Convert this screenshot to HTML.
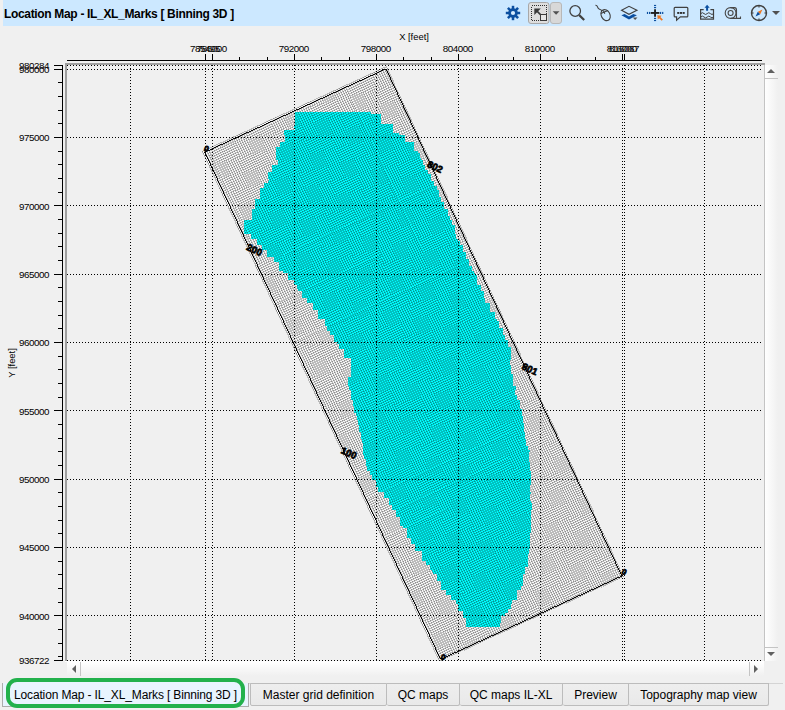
<!DOCTYPE html>
<html><head><meta charset="utf-8"><title>Location Map</title>
<style>
html,body{margin:0;padding:0;}
body{width:785px;height:710px;overflow:hidden;background:#f0f0f0;font-family:"Liberation Sans",sans-serif;position:relative;}
#title{position:absolute;left:3px;top:0;width:779px;height:26px;background:#cce8ff;}
#titler{position:absolute;left:782px;top:0;width:3px;height:26px;background:#e3f0fa;}
#title span{position:absolute;left:1px;top:7px;font-size:12px;font-weight:bold;color:#000;white-space:nowrap;letter-spacing:-0.33px;}
#main{position:absolute;left:0;top:0;}
.g{stroke:#000;stroke-width:1;stroke-dasharray:1 2;shape-rendering:crispEdges;}
.t{stroke:#000;stroke-width:1;shape-rendering:crispEdges;}
.al{font-size:9.8px;letter-spacing:-0.45px;fill:#000;font-family:"Liberation Sans",sans-serif;}
.ll{font-size:9.5px;font-weight:bold;fill:#000;stroke:#000;stroke-width:0.7px;font-family:"Liberation Sans",sans-serif;text-anchor:middle;}
.tab{position:absolute;top:683px;height:23px;box-sizing:border-box;border:1px solid #bcbcbc;border-left:none;background:linear-gradient(#eeeeee,#e9e9e9);font-size:12px;line-height:23px;text-align:center;color:#000;white-space:nowrap;border-radius:0 0 2px 2px;}
#tabsel{position:absolute;left:2px;top:683px;width:247px;height:24px;box-sizing:border-box;border:1px solid #acacac;border-top:none;background:#e8f4fe;}
#green{position:absolute;left:6px;top:678px;width:239px;height:30px;box-sizing:border-box;border:4px solid #22b14c;border-radius:11px;background:#e8f4fe;font-size:12px;line-height:26px;text-align:center;white-space:nowrap;color:#000;letter-spacing:-0.14px;}
</style></head><body>
<div id="title"><span>Location Map - IL_XL_Marks [ Binning 3D ]</span></div><div id="titler"></div>
<svg id="main" width="785" height="710" viewBox="0 0 785 710">
<!-- plot frame -->
<rect x="65" y="63" width="700" height="598" fill="#f0f0f0"/>
<rect x="65" y="63" width="700" height="2" fill="#a0a0a0"/>
<rect x="65" y="63" width="2" height="598" fill="#a0a0a0"/>
<rect x="65" y="661" width="699" height="1" fill="#ffffff"/>

<g clip-path="url(#pc)">
<defs>
<clipPath id="rc"><path d="M386.88 66.42 L624.19 576.88 L439.72 661.78 L202.41 151.32Z"/></clipPath>
<clipPath id="pc"><rect x="67" y="65" width="697" height="596"/></clipPath>
</defs>
<path d="M386.88 66.42 L624.19 576.88 L439.72 661.78 L202.41 151.32Z" fill="#f7f7f7"/>
<g clip-path="url(#rc)"><path d="M295 112H295V114.3H295V116.6H294.5V118.9H294.5V121.2H294.5V123.5H295V125.8H293.5V128.1H295V130.4H284V132.7H284V135H285V137.3H285V139.6H285V141.9H280V144.2H280V146.5H276V148.8H276V151.1H276V153.4H276V155.7H276V158H276V160.3H277.5V162.6H277.5V164.9H272V167.2H272V169.5H272V171.8H268V174.1H268V176.4H268V178.7H269V181H268V183.3H263.5V185.6H263.5V187.9H260V190.2H260V192.5H259.5V194.8H259.5V197.1H259.5V199.4H255V201.7H255V204H255V206.3H255V208.6H252V210.9H252V213.2H252V215.5H251.5V217.8H251.5V220.1H244V222.4H244V224.7H244V227H244V229.3H244V231.6H244V233.9H250.5V236.2H250.5V238.5H256.5V240.8H256.5V243.1H256.5V245.4H262V247.7H262V250H266.5V252.3H266.5V254.6H266.5V256.9H273.5V259.2H273.5V261.5H278.5V263.8H278.5V266.1H278.5V268.4H278.5V270.7H282.5V273H287.5V275.3H287.5V277.6H287.5V279.9H294V282.2H294V284.5H297V286.8H297V289.1H297.5V291.4H301.5V293.7H301.5V296H301.5V298.3H307V300.6H307V302.9H312.5V305.2H312.5V307.5H312.5V309.8H318V312.1H318V314.4H318V316.7H318V319H325V321.3H325V323.6H325V325.9H327V328.2H327V330.5H329.5V332.8H329.5V335.1H333.5V337.4H333.5V339.7H333.5V342H337V344.3H339V346.6H339V348.9H343.5V351.2H343.5V353.5H343.5V355.8H343.5V358.1H351V360.4H351V362.7H351V365H351V367.3H350.5V369.6H350.5V371.9H350.5V374.2H350.5V376.5H348V378.8H348V381.1H348V383.4H348V385.7H349V388H349V390.3H350.5V392.6H350.5V394.9H350.5V397.2H350.5V399.5H353V401.8H353V404.1H353V406.4H354V408.7H354V411H354V413.3H355.5V415.6H356.5V417.9H356.5V420.2H358V422.5H358V424.8H359V427.1H359V429.4H359V431.7H360.5V434H360.5V436.3H360.5V438.6H362V440.9H362V443.2H362.5V445.5H362.5V447.8H362.5V450.1H362.5V452.4H362.5V454.7H363.5V457H363.5V459.3H365.5V461.6H365.5V463.9H365.5V466.2H366.5V468.5H366.5V470.8H370V473.1H370V475.4H372V477.7H372V480H375.5V482.3H375.5V484.6H375.5V486.9H378V489.2H378V491.5H383.5V493.8H383.5V496.1H383.5V498.4H388.5V500.7H388.5V503H388.5V505.3H391.5V507.6H391.5V509.9H395.5V512.2H395.5V514.5H395.5V516.8H399.5V519.1H399.5V521.4H399.5V523.7H399.5V526H402.5V528.3H406.5V530.6H406.5V532.9H406.5V535.2H406.5V537.5H411V539.8H411V542.1H411V544.4H415V546.7H415V549H415V551.3H422V553.6H422V555.9H422V558.2H422V560.5H425.5V562.8H425.5V565.1H430V567.4H430V569.7H432V572H433V574.3H436.5V576.6H436.5V578.9H436.5V581.2H441V583.5H441V585.8H441V588.1H441V590.4H445.5V592.7H445.5V595H450.5V597.3H450.5V599.6H456V601.9H456V604.2H458V606.5H458V608.8H458V611.1H463V613.4H463V615.7H463V618H465.5V620.3H465.5V622.6H465.5V624.9H466V627H500V624.9H500V622.6H501V620.3H501V618H501V615.7H505V613.4H508V611.1H508V608.8H511V606.5H511V604.2H512V601.9H512V599.6H517V597.3H517V595H517V592.7H517V590.4H521V588.1H521V585.8H522.5V583.5H523V581.2H523V578.9H523V576.6H523V574.3H525V572H525V569.7H525V567.4H527.5V565.1H527.5V562.8H527.5V560.5H527.5V558.2H528V555.9H528V553.6H529V551.3H529V549H530V546.7H530V544.4H529.5V542.1H529.5V539.8H529.5V537.5H529.5V535.2H529.5V532.9H530.5V530.6H530.5V528.3H530.5V526H530.5V523.7H530.5V521.4H530.5V519.1H530.5V516.8H531V514.5H531V512.2H531V509.9H532V507.6H532V505.3H532V503H530.5V500.7H529.5V498.4H529.5V496.1H529.5V493.8H530.5V491.5H529.5V489.2H529.5V486.9H530V484.6H531V482.3H530.5V480H530.5V477.7H530.5V475.4H530.5V473.1H530.5V470.8H530V468.5H530V466.2H530V463.9H530V461.6H528.5V459.3H528.5V457H529V454.7H529V452.4H529.5V450.1H528V447.8H528V445.5H526V443.2H526V440.9H526V438.6H525V436.3H525V434H525V431.7H523.5V429.4H523.5V427.1H523.5V424.8H523.5V422.5H523V420.2H523V417.9H522.5V415.6H522V413.3H522V411H522V408.7H519.5V406.4H519.5V404.1H520V401.8H520V399.5H517V397.2H517V394.9H515V392.6H515V390.3H515.5V388H515.5V385.7H513V383.4H513V381.1H512.5V378.8H512.5V376.5H512.5V374.2H511V371.9H511V369.6H511V367.3H511V365H509.5V362.7H509.5V360.4H511V358.1H511V355.8H511V353.5H511V351.2H511V348.9H511V346.6H508V344.3H508V342H508V339.7H505V337.4H505V335.1H503V332.8H503V330.5H503V328.2H499V325.9H499V323.6H499V321.3H496.5V319H494.5V316.7H494.5V314.4H494.5V312.1H489.5V309.8H489.5V307.5H489.5V305.2H489.5V302.9H485V300.6H485V298.3H483.5V296H483.5V293.7H483.5V291.4H481V289.1H481V286.8H481V284.5H477V282.2H477V279.9H477V277.6H477V275.3H475V273H473.5V270.7H471.5V268.4H471.5V266.1H469V263.8H469V261.5H469V259.2H466V256.9H466V254.6H466V252.3H463V250H463V247.7H463V245.4H459.5V243.1H459.5V240.8H458V238.5H456V236.2H456V233.9H455V231.6H455V229.3H455V227H455V224.7H451.5V222.4H451.5V220.1H450V217.8H450V215.5H448V213.2H448V210.9H447.5V208.6H444V206.3H444V204H444V201.7H440.5V199.4H440.5V197.1H439V194.8H439V192.5H439V190.2H436.5V187.9H436.5V185.6H434V183.3H434V181H430.5V178.7H430.5V176.4H430.5V174.1H428V171.8H428V169.5H425V167.2H425V164.9H422.5V162.6H422.5V160.3H421V158H419.5V155.7H419.5V153.4H418V151.1H414V148.8H414V146.5H414V144.2H414V141.9H405V139.6H405V137.3H405V135H399V132.7H393V130.4H393V128.1H393V125.8H393V123.5H380.5V121.2H380.5V118.9H380.5V116.6H380.5V114.3H371V112Z" fill="#00ffff" shape-rendering="crispEdges"/></g>
<g opacity="0.262"><path d="M202.41 151.32L439.72 661.78M204.45 150.38L441.77 660.84M206.49 149.44L443.81 659.90M208.53 148.50L445.85 658.96M210.58 147.56L447.89 658.02M212.62 146.62L449.94 657.08M214.66 145.68L451.98 656.14M216.70 144.74L454.02 655.20M218.75 143.80L456.06 654.26M220.79 142.86L458.11 653.32M222.83 141.92L460.15 652.38M224.87 140.98L462.19 651.44M226.92 140.04L464.23 650.50M228.96 139.10L466.28 649.56M231.00 138.16L468.32 648.62M233.04 137.22L470.36 647.68M235.09 136.28L472.40 646.74M237.13 135.34L474.45 645.80M239.17 134.40L476.49 644.86M241.21 133.46L478.53 643.92M243.26 132.52L480.57 642.98M245.30 131.58L482.62 642.04M247.34 130.64L484.66 641.10M249.38 129.70L486.70 640.16M251.43 128.76L488.74 639.22M253.47 127.82L490.79 638.28M255.51 126.88L492.83 637.34M257.55 125.94L494.87 636.40M259.60 125.00L496.91 635.46M261.64 124.06L498.96 634.52M263.68 123.12L501.00 633.58M265.72 122.18L503.04 632.64M267.77 121.24L505.08 631.70M269.81 120.30L507.13 630.76M271.85 119.36L509.17 629.82M273.89 118.42L511.21 628.88M275.94 117.48L513.25 627.94M277.98 116.54L515.30 627.00M280.02 115.60L517.34 626.06M282.06 114.66L519.38 625.12M284.11 113.72L521.43 624.18M286.15 112.78L523.47 623.24M288.19 111.84L525.51 622.30M290.24 110.90L527.55 621.36M292.28 109.96L529.60 620.42M294.32 109.02L531.64 619.48M296.36 108.08L533.68 618.54M298.41 107.14L535.72 617.60M300.45 106.20L537.77 616.66M302.49 105.26L539.81 615.72M304.53 104.31L541.85 614.78M306.58 103.37L543.89 613.84M308.62 102.43L545.94 612.90M310.66 101.49L547.98 611.96M312.70 100.55L550.02 611.02M314.75 99.61L552.06 610.08M316.79 98.67L554.11 609.14M318.83 97.73L556.15 608.20M320.87 96.79L558.19 607.26M322.92 95.85L560.23 606.32M324.96 94.91L562.28 605.38M327.00 93.97L564.32 604.44M329.04 93.03L566.36 603.50M331.09 92.09L568.40 602.56M333.13 91.15L570.45 601.62M335.17 90.21L572.49 600.68M337.21 89.27L574.53 599.74M339.26 88.33L576.57 598.80M341.30 87.39L578.62 597.86M343.34 86.45L580.66 596.92M345.38 85.51L582.70 595.98M347.43 84.57L584.74 595.04M349.47 83.63L586.79 594.10M351.51 82.69L588.83 593.16M353.55 81.75L590.87 592.22M355.60 80.81L592.91 591.28M357.64 79.87L594.96 590.34M359.68 78.93L597.00 589.40M361.72 77.99L599.04 588.46M363.77 77.05L601.08 587.52M365.81 76.11L603.13 586.58M367.85 75.17L605.17 585.64M369.89 74.23L607.21 584.70M371.94 73.29L609.25 583.76M373.98 72.35L611.30 582.82M376.02 71.41L613.34 581.88M378.06 70.47L615.38 580.94M380.11 69.53L617.42 580.00M382.15 68.59L619.47 579.06M384.19 67.65L621.51 578.12M386.23 66.71L623.55 577.18" fill="none" stroke="#000" stroke-width="0.906" shape-rendering="crispEdges"/></g>
<g opacity="0.262"><path d="M202.41 151.32L386.88 66.42M203.35 153.36L387.82 68.45M204.30 155.40L388.77 70.49M205.25 157.44L389.72 72.53M206.20 159.48L390.67 74.57M207.15 161.51L391.62 76.61M208.09 163.55L392.56 78.65M209.04 165.59L393.51 80.69M209.99 167.63L394.46 82.73M210.94 169.67L395.41 84.77M211.89 171.71L396.36 86.80M212.83 173.75L397.30 88.84M213.78 175.79L398.25 90.88M214.73 177.83L399.20 92.92M215.68 179.87L400.15 94.96M216.62 181.90L401.09 97.00M217.57 183.94L402.04 99.04M218.52 185.98L402.99 101.08M219.47 188.02L403.94 103.12M220.42 190.06L404.89 105.15M221.36 192.10L405.83 107.19M222.31 194.14L406.78 109.23M223.26 196.18L407.73 111.27M224.21 198.22L408.68 113.31M225.16 200.25L409.63 115.35M226.10 202.29L410.57 117.39M227.05 204.33L411.52 119.43M228.00 206.37L412.47 121.47M228.95 208.41L413.42 123.51M229.90 210.45L414.37 125.54M230.84 212.49L415.31 127.58M231.79 214.53L416.26 129.62M232.74 216.57L417.21 131.66M233.69 218.60L418.16 133.70M234.63 220.64L419.11 135.74M235.58 222.68L420.05 137.78M236.53 224.72L421.00 139.82M237.48 226.76L421.95 141.86M238.43 228.80L422.90 143.89M239.37 230.84L423.84 145.93M240.32 232.88L424.79 147.97M241.27 234.92L425.74 150.01M242.22 236.96L426.69 152.05M243.17 238.99L427.64 154.09M244.11 241.03L428.58 156.13M245.06 243.07L429.53 158.17M246.01 245.11L430.48 160.21M246.96 247.15L431.43 162.24M247.91 249.19L432.38 164.28M248.85 251.23L433.32 166.32M249.80 253.27L434.27 168.36M250.75 255.31L435.22 170.40M251.70 257.34L436.17 172.44M252.65 259.38L437.12 174.48M253.59 261.42L438.06 176.52M254.54 263.46L439.01 178.56M255.49 265.50L439.96 180.60M256.44 267.54L440.91 182.63M257.38 269.58L441.85 184.67M258.33 271.62L442.80 186.71M259.28 273.66L443.75 188.75M260.23 275.69L444.70 190.79M261.18 277.73L445.65 192.83M262.12 279.77L446.59 194.87M263.07 281.81L447.54 196.91M264.02 283.85L448.49 198.95M264.97 285.89L449.44 200.98M265.92 287.93L450.39 203.02M266.86 289.97L451.33 205.06M267.81 292.01L452.28 207.10M268.76 294.05L453.23 209.14M269.71 296.08L454.18 211.18M270.66 298.12L455.13 213.22M271.60 300.16L456.07 215.26M272.55 302.20L457.02 217.30M273.50 304.24L457.97 219.33M274.45 306.28L458.92 221.37M275.39 308.32L459.87 223.41M276.34 310.36L460.81 225.45M277.29 312.40L461.76 227.49M278.24 314.43L462.71 229.53M279.19 316.47L463.66 231.57M280.13 318.51L464.60 233.61M281.08 320.55L465.55 235.65M282.03 322.59L466.50 237.69M282.98 324.63L467.45 239.72M283.93 326.67L468.40 241.76M284.87 328.71L469.34 243.80M285.82 330.75L470.29 245.84M286.77 332.78L471.24 247.88M287.72 334.82L472.19 249.92M288.67 336.86L473.14 251.96M289.61 338.90L474.08 254.00M290.56 340.94L475.03 256.04M291.51 342.98L475.98 258.07M292.46 345.02L476.93 260.11M293.41 347.06L477.88 262.15M294.35 349.10L478.82 264.19M295.30 351.14L479.77 266.23M296.25 353.17L480.72 268.27M297.20 355.21L481.67 270.31M298.14 357.25L482.61 272.35M299.09 359.29L483.56 274.39M300.04 361.33L484.51 276.42M300.99 363.37L485.46 278.46M301.94 365.41L486.41 280.50M302.88 367.45L487.35 282.54M303.83 369.49L488.30 284.58M304.78 371.52L489.25 286.62M305.73 373.56L490.20 288.66M306.68 375.60L491.15 290.70M307.62 377.64L492.09 292.74M308.57 379.68L493.04 294.77M309.52 381.72L493.99 296.81M310.47 383.76L494.94 298.85M311.42 385.80L495.89 300.89M312.36 387.84L496.83 302.93M313.31 389.87L497.78 304.97M314.26 391.91L498.73 307.01M315.21 393.95L499.68 309.05M316.16 395.99L500.63 311.09M317.10 398.03L501.57 313.13M318.05 400.07L502.52 315.16M319.00 402.11L503.47 317.20M319.95 404.15L504.42 319.24M320.89 406.19L505.36 321.28M321.84 408.23L506.31 323.32M322.79 410.26L507.26 325.36M323.74 412.30L508.21 327.40M324.69 414.34L509.16 329.44M325.63 416.38L510.10 331.48M326.58 418.42L511.05 333.51M327.53 420.46L512.00 335.55M328.48 422.50L512.95 337.59M329.43 424.54L513.90 339.63M330.37 426.58L514.84 341.67M331.32 428.61L515.79 343.71M332.27 430.65L516.74 345.75M333.22 432.69L517.69 347.79M334.17 434.73L518.64 349.83M335.11 436.77L519.58 351.86M336.06 438.81L520.53 353.90M337.01 440.85L521.48 355.94M337.96 442.89L522.43 357.98M338.90 444.93L523.38 360.02M339.85 446.96L524.32 362.06M340.80 449.00L525.27 364.10M341.75 451.04L526.22 366.14M342.70 453.08L527.17 368.18M343.64 455.12L528.11 370.22M344.59 457.16L529.06 372.25M345.54 459.20L530.01 374.29M346.49 461.24L530.96 376.33M347.44 463.28L531.91 378.37M348.38 465.32L532.85 380.41M349.33 467.35L533.80 382.45M350.28 469.39L534.75 384.49M351.23 471.43L535.70 386.53M352.18 473.47L536.65 388.57M353.12 475.51L537.59 390.60M354.07 477.55L538.54 392.64M355.02 479.59L539.49 394.68M355.97 481.63L540.44 396.72M356.92 483.67L541.39 398.76M357.86 485.70L542.33 400.80M358.81 487.74L543.28 402.84M359.76 489.78L544.23 404.88M360.71 491.82L545.18 406.92M361.65 493.86L546.12 408.95M362.60 495.90L547.07 410.99M363.55 497.94L548.02 413.03M364.50 499.98L548.97 415.07M365.45 502.02L549.92 417.11M366.39 504.05L550.86 419.15M367.34 506.09L551.81 421.19M368.29 508.13L552.76 423.23M369.24 510.17L553.71 425.27M370.19 512.21L554.66 427.31M371.13 514.25L555.60 429.34M372.08 516.29L556.55 431.38M373.03 518.33L557.50 433.42M373.98 520.37L558.45 435.46M374.93 522.41L559.40 437.50M375.87 524.44L560.34 439.54M376.82 526.48L561.29 441.58M377.77 528.52L562.24 443.62M378.72 530.56L563.19 445.66M379.66 532.60L564.14 447.69M380.61 534.64L565.08 449.73M381.56 536.68L566.03 451.77M382.51 538.72L566.98 453.81M383.46 540.76L567.93 455.85M384.40 542.79L568.87 457.89M385.35 544.83L569.82 459.93M386.30 546.87L570.77 461.97M387.25 548.91L571.72 464.01M388.20 550.95L572.67 466.04M389.14 552.99L573.61 468.08M390.09 555.03L574.56 470.12M391.04 557.07L575.51 472.16M391.99 559.11L576.46 474.20M392.94 561.14L577.41 476.24M393.88 563.18L578.35 478.28M394.83 565.22L579.30 480.32M395.78 567.26L580.25 482.36M396.73 569.30L581.20 484.40M397.68 571.34L582.15 486.43M398.62 573.38L583.09 488.47M399.57 575.42L584.04 490.51M400.52 577.46L584.99 492.55M401.47 579.49L585.94 494.59M402.41 581.53L586.88 496.63M403.36 583.57L587.83 498.67M404.31 585.61L588.78 500.71M405.26 587.65L589.73 502.75M406.21 589.69L590.68 504.78M407.15 591.73L591.62 506.82M408.10 593.77L592.57 508.86M409.05 595.81L593.52 510.90M410.00 597.85L594.47 512.94M410.95 599.88L595.42 514.98M411.89 601.92L596.36 517.02M412.84 603.96L597.31 519.06M413.79 606.00L598.26 521.10M414.74 608.04L599.21 523.13M415.69 610.08L600.16 525.17M416.63 612.12L601.10 527.21M417.58 614.16L602.05 529.25M418.53 616.20L603.00 531.29M419.48 618.23L603.95 533.33M420.42 620.27L604.90 535.37M421.37 622.31L605.84 537.41M422.32 624.35L606.79 539.45M423.27 626.39L607.74 541.49M424.22 628.43L608.69 543.52M425.16 630.47L609.63 545.56M426.11 632.51L610.58 547.60M427.06 634.55L611.53 549.64M428.01 636.58L612.48 551.68M428.96 638.62L613.43 553.72M429.90 640.66L614.37 555.76M430.85 642.70L615.32 557.80M431.80 644.74L616.27 559.84M432.75 646.78L617.22 561.87M433.70 648.82L618.17 563.91M434.64 650.86L619.11 565.95M435.59 652.90L620.06 567.99M436.54 654.94L621.01 570.03M437.49 656.97L621.96 572.07M438.44 659.01L622.91 574.11M439.38 661.05L623.85 576.15" fill="none" stroke="#000" stroke-width="0.906" shape-rendering="crispEdges"/></g>
<path d="M386 68.8 L621.8 576 L440.6 659.4 L204.8 152.2Z" fill="none" stroke="#000" stroke-width="0.95" shape-rendering="crispEdges"/>
<line x1="130.5" y1="65" x2="130.5" y2="661" class="g"/>
<line x1="205.5" y1="65" x2="205.5" y2="661" class="g"/>
<line x1="212.5" y1="65" x2="212.5" y2="661" class="g"/>
<line x1="294.5" y1="65" x2="294.5" y2="661" class="g"/>
<line x1="376.5" y1="65" x2="376.5" y2="661" class="g"/>
<line x1="458.5" y1="65" x2="458.5" y2="661" class="g"/>
<line x1="540.5" y1="65" x2="540.5" y2="661" class="g"/>
<line x1="622.5" y1="65" x2="622.5" y2="661" class="g"/>
<line x1="624.5" y1="65" x2="624.5" y2="661" class="g"/>
<line x1="704.5" y1="65" x2="704.5" y2="661" class="g"/>
<line x1="67" y1="65.5" x2="763" y2="65.5" class="g"/>
<line x1="67" y1="69.5" x2="763" y2="69.5" class="g"/>
<line x1="67" y1="137.5" x2="763" y2="137.5" class="g"/>
<line x1="67" y1="205.5" x2="763" y2="205.5" class="g"/>
<line x1="67" y1="274.5" x2="763" y2="274.5" class="g"/>
<line x1="67" y1="342.5" x2="763" y2="342.5" class="g"/>
<line x1="67" y1="410.5" x2="763" y2="410.5" class="g"/>
<line x1="67" y1="479.5" x2="763" y2="479.5" class="g"/>
<line x1="67" y1="547.5" x2="763" y2="547.5" class="g"/>
<line x1="67" y1="615.5" x2="763" y2="615.5" class="g"/>
<line x1="67" y1="660.5" x2="763" y2="660.5" class="g"/>
<text x="253" y="252.8" transform="rotate(25 253 252.8)" class="ll">200</text>
<text x="347.5" y="456" transform="rotate(25 347.5 456)" class="ll">100</text>
<text x="433.7" y="169.9" transform="rotate(25 433.7 169.9)" class="ll">802</text>
<text x="528.5" y="372.2" transform="rotate(25 528.5 372.2)" class="ll">801</text>
<text x="205.3" y="151.2" transform="rotate(25 205.3 151.2)" class="ll" style="font-size:8px">0</text>
<text x="622.9" y="574.4" transform="rotate(25 622.9 574.4)" class="ll" style="font-size:8px">0</text>
<text x="441.9" y="659.8" transform="rotate(25 441.9 659.8)" class="ll" style="font-size:8px">0</text>
</g>
<line x1="67" y1="60.5" x2="762" y2="60.5" stroke="#000" stroke-width="1" shape-rendering="crispEdges"/>
<line x1="62.5" y1="65" x2="62.5" y2="661" stroke="#000" stroke-width="1" shape-rendering="crispEdges"/>
<line x1="212.5" y1="54" x2="212.5" y2="60" class="t"/>
<line x1="239.5" y1="57" x2="239.5" y2="60" class="t"/>
<line x1="267.5" y1="57" x2="267.5" y2="60" class="t"/>
<line x1="294.5" y1="54" x2="294.5" y2="60" class="t"/>
<line x1="321.5" y1="57" x2="321.5" y2="60" class="t"/>
<line x1="349.5" y1="57" x2="349.5" y2="60" class="t"/>
<line x1="376.5" y1="54" x2="376.5" y2="60" class="t"/>
<line x1="403.5" y1="57" x2="403.5" y2="60" class="t"/>
<line x1="431.5" y1="57" x2="431.5" y2="60" class="t"/>
<line x1="458.5" y1="54" x2="458.5" y2="60" class="t"/>
<line x1="485.5" y1="57" x2="485.5" y2="60" class="t"/>
<line x1="513.5" y1="57" x2="513.5" y2="60" class="t"/>
<line x1="540.5" y1="54" x2="540.5" y2="60" class="t"/>
<line x1="567.5" y1="57" x2="567.5" y2="60" class="t"/>
<line x1="595.5" y1="57" x2="595.5" y2="60" class="t"/>
<line x1="622.5" y1="54" x2="622.5" y2="60" class="t"/>
<line x1="205.5" y1="54" x2="205.5" y2="60" class="t"/>
<line x1="624.5" y1="54" x2="624.5" y2="60" class="t"/>
<line x1="54" y1="69.5" x2="62" y2="69.5" class="t"/>
<line x1="58" y1="82.5" x2="62" y2="82.5" class="t"/>
<line x1="58" y1="96.5" x2="62" y2="96.5" class="t"/>
<line x1="58" y1="110.5" x2="62" y2="110.5" class="t"/>
<line x1="58" y1="123.5" x2="62" y2="123.5" class="t"/>
<line x1="54" y1="137.5" x2="62" y2="137.5" class="t"/>
<line x1="58" y1="151.5" x2="62" y2="151.5" class="t"/>
<line x1="58" y1="164.5" x2="62" y2="164.5" class="t"/>
<line x1="58" y1="178.5" x2="62" y2="178.5" class="t"/>
<line x1="58" y1="192.5" x2="62" y2="192.5" class="t"/>
<line x1="54" y1="205.5" x2="62" y2="205.5" class="t"/>
<line x1="58" y1="219.5" x2="62" y2="219.5" class="t"/>
<line x1="58" y1="233.5" x2="62" y2="233.5" class="t"/>
<line x1="58" y1="246.5" x2="62" y2="246.5" class="t"/>
<line x1="58" y1="260.5" x2="62" y2="260.5" class="t"/>
<line x1="54" y1="274.5" x2="62" y2="274.5" class="t"/>
<line x1="58" y1="287.5" x2="62" y2="287.5" class="t"/>
<line x1="58" y1="301.5" x2="62" y2="301.5" class="t"/>
<line x1="58" y1="315.5" x2="62" y2="315.5" class="t"/>
<line x1="58" y1="328.5" x2="62" y2="328.5" class="t"/>
<line x1="54" y1="342.5" x2="62" y2="342.5" class="t"/>
<line x1="58" y1="356.5" x2="62" y2="356.5" class="t"/>
<line x1="58" y1="369.5" x2="62" y2="369.5" class="t"/>
<line x1="58" y1="383.5" x2="62" y2="383.5" class="t"/>
<line x1="58" y1="397.5" x2="62" y2="397.5" class="t"/>
<line x1="54" y1="410.5" x2="62" y2="410.5" class="t"/>
<line x1="58" y1="424.5" x2="62" y2="424.5" class="t"/>
<line x1="58" y1="438.5" x2="62" y2="438.5" class="t"/>
<line x1="58" y1="451.5" x2="62" y2="451.5" class="t"/>
<line x1="58" y1="465.5" x2="62" y2="465.5" class="t"/>
<line x1="54" y1="479.5" x2="62" y2="479.5" class="t"/>
<line x1="58" y1="492.5" x2="62" y2="492.5" class="t"/>
<line x1="58" y1="506.5" x2="62" y2="506.5" class="t"/>
<line x1="58" y1="520.5" x2="62" y2="520.5" class="t"/>
<line x1="58" y1="533.5" x2="62" y2="533.5" class="t"/>
<line x1="54" y1="547.5" x2="62" y2="547.5" class="t"/>
<line x1="58" y1="561.5" x2="62" y2="561.5" class="t"/>
<line x1="58" y1="574.5" x2="62" y2="574.5" class="t"/>
<line x1="58" y1="588.5" x2="62" y2="588.5" class="t"/>
<line x1="58" y1="602.5" x2="62" y2="602.5" class="t"/>
<line x1="54" y1="615.5" x2="62" y2="615.5" class="t"/>
<line x1="58" y1="629.5" x2="62" y2="629.5" class="t"/>
<line x1="58" y1="643.5" x2="62" y2="643.5" class="t"/>
<line x1="58" y1="656.5" x2="62" y2="656.5" class="t"/>
<line x1="54" y1="65.5" x2="62" y2="65.5" class="t"/>
<line x1="54" y1="660.5" x2="62" y2="660.5" class="t"/>
<text x="211.7" y="52" class="al" text-anchor="middle">786000</text>
<text x="293.7" y="52" class="al" text-anchor="middle">792000</text>
<text x="375.7" y="52" class="al" text-anchor="middle">798000</text>
<text x="457.7" y="52" class="al" text-anchor="middle">804000</text>
<text x="539.7" y="52" class="al" text-anchor="middle">810000</text>
<text x="621.7" y="52" class="al" text-anchor="middle">816000</text>
<text x="205" y="52" class="al" text-anchor="middle">785495</text>
<text x="624" y="52" class="al" text-anchor="middle">816067</text>
<text x="49" y="72.9" class="al" text-anchor="end">980000</text>
<text x="49" y="141.2" class="al" text-anchor="end">975000</text>
<text x="49" y="209.6" class="al" text-anchor="end">970000</text>
<text x="49" y="277.9" class="al" text-anchor="end">965000</text>
<text x="49" y="346.2" class="al" text-anchor="end">960000</text>
<text x="49" y="414.6" class="al" text-anchor="end">955000</text>
<text x="49" y="482.9" class="al" text-anchor="end">950000</text>
<text x="49" y="551.2" class="al" text-anchor="end">945000</text>
<text x="49" y="619.5" class="al" text-anchor="end">940000</text>
<text x="49" y="68.6" class="al" text-anchor="end">980284</text>
<text x="49" y="663.9" class="al" text-anchor="end">936722</text>
<text x="414" y="39.8" class="al" style="letter-spacing:0;font-size:9.4px" text-anchor="middle">X [feet]</text>
<text x="14.5" y="363" class="al" style="letter-spacing:0;font-size:9.4px" text-anchor="middle" transform="rotate(-90 14.5 363)">Y [feet]</text>
<!-- scrollbars -->
<defs><linearGradient id="hs" x1="0" y1="0" x2="0" y2="1"><stop offset="0" stop-color="#ffffff"/><stop offset="1" stop-color="#f0f0f0"/></linearGradient>
<linearGradient id="vs" x1="0" y1="0" x2="1" y2="0"><stop offset="0" stop-color="#ffffff"/><stop offset="1" stop-color="#f0f0f0"/></linearGradient></defs>
<rect x="67" y="662" width="697" height="14" fill="url(#hs)"/>
<rect x="765" y="65" width="13" height="596" fill="url(#vs)"/>
<line x1="764.5" y1="65" x2="764.5" y2="661" stroke="#c4c4c4"/>
<line x1="80.5" y1="662" x2="80.5" y2="676" stroke="#c4c4c4"/>
<line x1="749.5" y1="662" x2="749.5" y2="676" stroke="#c4c4c4"/>
<line x1="765" y1="78.5" x2="778" y2="78.500" stroke="#c4c4c4"/>
<line x1="765" y1="647.500" x2="778" y2="647.500" stroke="#c4c4c4"/>
<path d="M76 665 L72 669 L76 673Z" fill="#606060"/>
<path d="M754 665 L758 669 L754 673Z" fill="#606060"/>
<path d="M767 73 L771 69 L775 73Z" fill="#606060"/>
<path d="M767 652 L771 656 L775 652Z" fill="#606060"/>
<!-- tab baseline -->
<line x1="2" y1="683.5" x2="783" y2="683.5" stroke="#d4d4d4"/>
<!-- toolbar icons -->
<g id="icons">
<!-- gear -->
<g transform="translate(513 13)">
<g stroke="#0b4fa0" stroke-width="2.5"><line x1="0" y1="-7.200" x2="0" y2="7.200"/><line x1="-7.200" y1="0" x2="7.200" y2="0"/><line x1="-5.100" y1="-5.100" x2="5.100" y2="5.100"/><line x1="-5.100" y1="5.100" x2="5.100" y2="-5.100"/></g>
<circle r="4.800" fill="#0b4fa0"/>
<circle r="2.100" fill="#d6ecff"/>
</g>
<!-- select button -->
<rect x="528.500" y="2.500" width="20.500" height="21" rx="2.500" fill="#dedede" stroke="#a8a8a8"/>
<rect x="550.500" y="2.500" width="11" height="21" rx="2.500" fill="#d8d8d8" stroke="#b8b8b8"/>
<path d="M552.700 11.200 L559.500 11.200 L556.100 14.800Z" fill="#505050"/>
<rect x="531.500" y="5.500" width="15" height="15" fill="none" stroke="#303030" stroke-dasharray="1 1" shape-rendering="crispEdges"/>
<path d="M534.300 8.400 L540.800 8.400 L534.300 14.900Z" fill="#3a3a3a"/>
<line x1="536.500" y1="10.600" x2="541.500" y2="15.600" stroke="#3a3a3a" stroke-width="1.600"/>
<rect x="540.500" y="14.500" width="6" height="6" fill="#e6e6e6" stroke="#3a3a3a"/>
<!-- magnifier -->
<circle cx="575.200" cy="11" r="5.300" fill="none" stroke="#404040" stroke-width="1.300"/>
<line x1="579.200" y1="15.100" x2="584.200" y2="20" stroke="#404040" stroke-width="2.200"/>
<!-- mouse -->
<g fill="none" stroke="#404040" stroke-width="1.100">
<ellipse cx="605.600" cy="15.100" rx="4.300" ry="5.800" transform="rotate(-28 605.600 15.100)"/>
<path d="M595.400 5.200 C598.500 5 596.500 8.500 599.500 9.300 C601 9.700 601.500 10.200 602.300 11"/>
<path d="M600.800 13.600 L608 10.500 M603.300 10.600 L604.800 13.800"/>
</g>
<!-- layers -->
<path d="M621.600 10.200 L629 6.300 L636.900 10.200 L629 14.300Z" fill="none" stroke="#404040" stroke-width="1.200"/>
<path d="M621.400 15.300 L624.600 14.100 L629 16.400 L633.300 14.100 L636.900 15.300 L629 19.600Z" fill="#0b4fa0"/>
<path d="M632.800 17.500 L637.500 17.500 L635.100 20Z" fill="#505050"/>
<!-- crosshair -->
<g fill="#0b4fa0"><rect x="646.900" y="11.900" width="1.200" height="2.100"/><rect x="649" y="11.900" width="1.200" height="2.100"/><rect x="660" y="11.900" width="1.200" height="2.100"/><rect x="662.100" y="11.900" width="1.200" height="2.100"/>
<rect x="654" y="4.900" width="2.100" height="1.200"/><rect x="654" y="7" width="2.100" height="1.200"/><rect x="654" y="17.800" width="2.100" height="1.200"/><rect x="654" y="19.900" width="2.100" height="1.200"/></g>
<g stroke="#202020" stroke-width="1.900"><line x1="650.700" y1="12.950" x2="659.400" y2="12.950"/><line x1="655.050" y1="9.200" x2="655.050" y2="16.800"/></g>
<path d="M657.300 15.200 L661.600 15.700 L660.300 17 L662.900 19.600 L661.700 20.800 L659.100 18.200 L657.800 19.500Z" fill="#f07820"/>
<!-- speech -->
<path d="M675.100 7.400 H686.900 Q687.800 7.400 687.800 8.300 V15.900 Q687.800 16.800 686.900 16.800 H680.400 L676.600 20.200 V16.800 H675.100 Q674.200 16.800 674.200 15.900 V8.300 Q674.200 7.400 675.100 7.400Z" fill="none" stroke="#404040" stroke-width="1.200"/>
<g fill="#303030"><rect x="677.200" y="12" width="2.100" height="1.900"/><rect x="679.900" y="12" width="2.100" height="1.900"/><rect x="682.600" y="12" width="2.100" height="1.900"/></g>
<!-- export -->
<path d="M703.700 9.700 H700.600 V19.200 H713.500 V9.700 H710.400" fill="none" stroke="#404040" stroke-width="1.200"/>
<path d="M700.800 13.600 q1.600 -1.800 3.200 0 t3.200 0 t3.200 0 t3.200 0" fill="none" stroke="#404040" stroke-width="1"/>
<path d="M700.800 17 q1.600 -1.800 3.200 0 t3.200 0 t3.200 0 t3.200 0" fill="none" stroke="#404040" stroke-width="1"/>
<path d="M707.100 4.800 L709.700 7.800 H708.100 V10.800 H706.100 V7.800 H704.500Z" fill="#0b4fa0"/>
<!-- tape -->
<circle cx="730.600" cy="13" r="5.400" fill="none" stroke="#484848" stroke-width="1.100"/>
<circle cx="730.600" cy="13" r="2.500" fill="none" stroke="#484848" stroke-width="1.100"/>
<path d="M730.600 7.600 H734.500 Q736.500 7.600 736.500 10 V18.400 H740.500 V16.500 M730.600 18.400 H737" fill="none" stroke="#484848" stroke-width="1.100"/>
<!-- compass -->
<circle cx="759" cy="13" r="7.500" fill="none" stroke="#404040" stroke-width="1.400"/>
<path d="M762.500 9.500 L760.200 14.200 L757.800 11.800Z" fill="#f07820"/>
<path d="M755.500 16.500 L757.800 11.800 L760.200 14.200Z" fill="#0b4fa0"/>
<g stroke="#404040" stroke-width="1.200"><line x1="759" y1="5.500" x2="759" y2="7.500"/><line x1="759" y1="18.500" x2="759" y2="20.500"/><line x1="751.500" y1="13" x2="753.500" y2="13"/><line x1="764.500" y1="13" x2="766.500" y2="13"/></g>
<path d="M772 11 L780 11 L776 15Z" fill="#505050"/>
</g>

</svg>
<div id="tabsel"></div>
<div class="tab" style="left:250px;width:137px;border-left:1px solid #bcbcbc;">Master grid definition</div>
<div class="tab" style="left:387px;width:73px;">QC maps</div>
<div class="tab" style="left:460px;width:103px;">QC maps IL-XL</div>
<div class="tab" style="left:563px;width:66px;">Preview</div>
<div class="tab" style="left:629px;width:140px;">Topography map view</div>
<div id="green">Location Map - IL_XL_Marks [ Binning 3D ]</div>
</body></html>
